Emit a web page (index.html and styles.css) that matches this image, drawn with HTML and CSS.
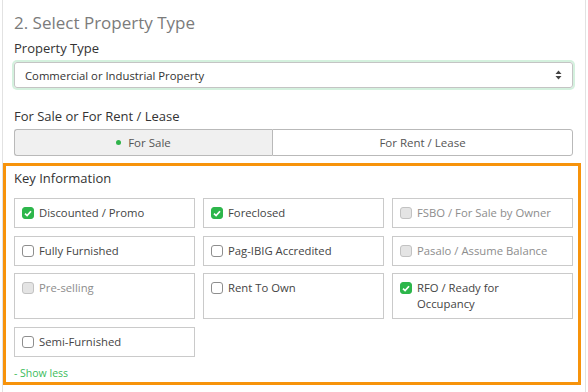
FILE: index.html
```html
<!DOCTYPE html>
<html lang="en">
<head>
<meta charset="utf-8">
<title>Select Property Type</title>
<link rel="stylesheet" href="styles.css">
</head>
<body>
<div class="panel">
  <h2 class="step-title">2. Select Property Type</h2>
  <div class="field-label first-label">Property Type</div>
  <div class="select">
    <span class="select-value">Commercial or Industrial Property</span>
    <svg class="select-arrows" width="7" height="10" viewBox="0 0 7 10"><path d="M3.5 0.5 L6.5 4 L0.5 4 Z M0.5 6 L6.5 6 L3.5 9.5 Z" fill="#444"/></svg>
  </div>
  <div class="field-label label-gap">For Sale or For Rent / Lease</div>
  <div class="segmented">
    <div class="seg seg-active"><span class="dot"></span>For Sale</div>
    <div class="seg">For Rent / Lease</div>
  </div>
  <section class="key-info">
    <div class="key-title">Key Information</div>
    <div class="grid">
      <label class="card"><span class="cb cb-checked"><svg width="8" height="7" viewBox="0 0 8 7"><path d="M1 3.6 L3.1 5.6 L7 1.2" fill="none" stroke="#fff" stroke-width="1.7"/></svg></span><span class="txt">Discounted / Promo</span></label>
      <label class="card"><span class="cb cb-checked"><svg width="8" height="7" viewBox="0 0 8 7"><path d="M1 3.6 L3.1 5.6 L7 1.2" fill="none" stroke="#fff" stroke-width="1.7"/></svg></span><span class="txt">Foreclosed</span></label>
      <label class="card disabled"><span class="cb cb-disabled"></span><span class="txt">FSBO / For Sale by Owner</span></label>
      <label class="card"><span class="cb"></span><span class="txt">Fully Furnished</span></label>
      <label class="card"><span class="cb"></span><span class="txt">Pag-IBIG Accredited</span></label>
      <label class="card disabled"><span class="cb cb-disabled"></span><span class="txt">Pasalo / Assume Balance</span></label>
      <label class="card disabled"><span class="cb cb-disabled"></span><span class="txt">Pre-selling</span></label>
      <label class="card"><span class="cb"></span><span class="txt">Rent To Own</span></label>
      <label class="card"><span class="cb cb-checked"><svg width="8" height="7" viewBox="0 0 8 7"><path d="M1 3.6 L3.1 5.6 L7 1.2" fill="none" stroke="#fff" stroke-width="1.7"/></svg></span><span class="txt">RFO / Ready for Occupancy</span></label>
      <label class="card"><span class="cb"></span><span class="txt">Semi-Furnished</span></label>
    </div>
    <div class="show-less">- Show less</div>
  </section>
</div>
</body>
</html>
```

FILE: styles.css
```css
html, body {
  margin: 0;
  padding: 0;
  background: #fff;
  font-family: "Open Sans", "Liberation Sans", sans-serif;
}

.panel {
  margin-left: 2px;
  width: 584px;
  height: 392px;
  padding: 12px 0 0 11px;
  box-sizing: border-box;
  border-left: 1px solid #e2e2e2;
  border-right: 1px solid #e2e2e2;
  overflow: hidden;
}

.step-title {
  margin: 0;
  font-size: 17px;
  font-weight: 400;
  line-height: 22px;
  color: #7b7b7b;
}

.field-label {
  margin-top: 6px;
  font-size: 13px;
  line-height: 18px;
  color: #333;
}

.first-label {
  margin-top: 5px;
}

.label-gap {
  margin-top: 19px;
}

.select {
  margin-top: 5px;
  width: 559px;
  height: 26px;
  box-sizing: border-box;
  border: 1px solid #c4c4c4;
  border-radius: 3px;
  box-shadow: 0 0 0 2px #d4f1de;
  display: flex;
  align-items: center;
  justify-content: space-between;
  padding: 0 10px 0 10px;
}

.select-value {
  font-size: 11.3px;
  color: #333;
}

.select-arrows {
  display: block;
}

.segmented {
  margin-top: 4px;
  width: 559px;
  height: 27px;
  display: flex;
}

.seg {
  flex: 0 0 301px;
  box-sizing: border-box;
  border: 1px solid #b9b9b9;
  border-radius: 0 3px 3px 0;
  display: flex;
  align-items: center;
  justify-content: center;
  font-size: 11.5px;
  color: #555;
  background: #fff;
}

.seg-active {
  flex: 0 0 258px;
  border-right: none;
  border-radius: 3px 0 0 3px;
  background: #f0f0f0;
}

.dot {
  width: 5px;
  height: 5px;
  border-radius: 50%;
  background: #2fb34a;
  margin-right: 7px;
}

.key-info {
  margin: 7px 0 0 -11px;
  width: 578px;
  box-sizing: border-box;
  border: 3px solid #f7930b;
  padding: 3px 5px 2px 8px;
}

.key-title {
  font-size: 13px;
  line-height: 18px;
  color: #333;
}

.grid {
  margin-top: 11px;
  display: grid;
  grid-template-columns: repeat(3, 1fr);
  column-gap: 8px;
  row-gap: 7.5px;
  align-items: stretch;
}

.card {
  display: flex;
  align-items: flex-start;
  box-sizing: border-box;
  min-height: 30px;
  border: 1px solid #cacaca;
  padding: 6px 18px 6px 7px;
  font-size: 11.3px;
  line-height: 16px;
  color: #444;
}

.cb {
  flex: 0 0 auto;
  width: 12px;
  height: 12px;
  box-sizing: border-box;
  border: 1px solid #8e8e8e;
  border-radius: 3px;
  margin-top: 2px;
  margin-right: 5px;
  background: #fff;
  display: flex;
  align-items: center;
  justify-content: center;
}

.cb-checked {
  background: #2db64b;
  border-color: #2db64b;
}

.cb-disabled {
  background: #e4e4e4;
  border-color: #c2c2c2;
}

.disabled .txt {
  color: #8d8d8d;
}

.show-less {
  margin-top: 9px;
  font-size: 10.5px;
  line-height: 14px;
  color: #3cbc5b;
}
```
